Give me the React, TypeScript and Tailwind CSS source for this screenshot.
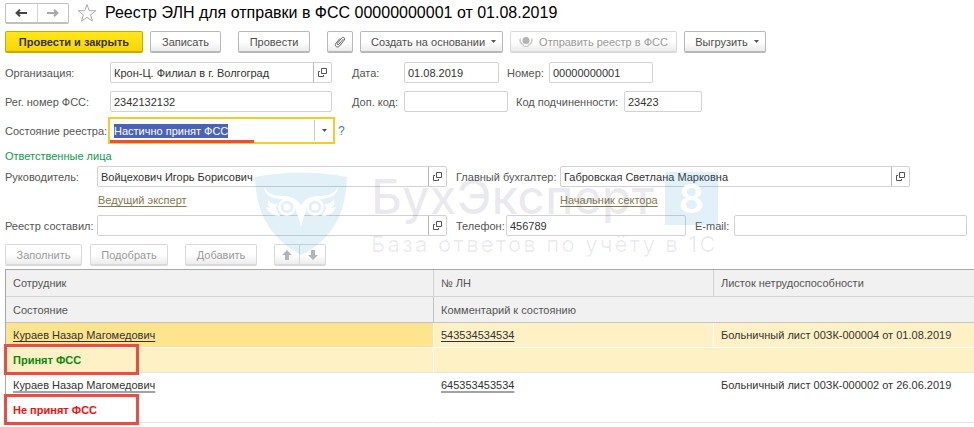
import { useEffect, useRef } from "react";
import type { ReactNode } from "react";
import clsx from "clsx";

const OpenIcon = (): JSX.Element => (
  <svg className="size-[9px]" viewBox="0 0 9 9" fill="none" stroke="#555">
    <path d="M3.5 .5h5v5h-5z" />
    <path d="M2 3.5H.5v5h5V7" />
  </svg>
);

const ClipIcon = (): JSX.Element => (
  <svg
    className="h-3 w-3"
    viewBox="0 0 12 12"
    fill="none"
    stroke="#666"
    strokeLinecap="round"
    strokeLinejoin="round"
  >
    <path d="M9 3.500 4.800 8.300c-1 1-2.200.1-1.400-1L7.500 2.200C9 .400 11.800 2 10.300 4L5.800 9.800c-2 2.500-5.800.6-4-2.300L5.500 2.800" />
  </svg>
);

const SendIcon = (): JSX.Element => (
  <svg className="h-3 w-3.5" viewBox="0 0 14 12" fill="none" stroke="#c8c8c8">
    <circle cx="7" cy="4.500" r="3.500" fill="#b4b4b4" stroke="none" />
    <path d="M1.500 2.500c-1 2.500 0 4.500 1.500 5.500l2 1.500M12.500 2.500c1 2.500 0 4.500-1.500 5.500l-2 1.500" strokeWidth="1.500" />
    <path d="M4.500 10.500h5" />
  </svg>
);

const StarIcon = (): JSX.Element => (
  <svg className="h-5 w-5" viewBox="0 0 20 20" fill="none" stroke="#aaa">
    <path d="m10 1.500 2.200 6.200 6.600.1-5.200 4 1.900 6.300L10 14.400l-5.500 3.700 1.900-6.300-5.200-4 6.600-.1z" />
  </svg>
);

const NavArrow = ({ color, back }: { color: string; back?: boolean }): JSX.Element => (
  <svg
    className={clsx("h-2 w-3", !back && "rotate-180")}
    viewBox="0 0 12 8"
    fill="none"
    stroke={color}
    strokeWidth="2"
  >
    <path d="M1.500 4H12M5 .8 1.600 4 5 7.200" />
  </svg>
);

const MoveArrow = ({ down }: { down?: boolean }): JSX.Element => (
  <svg className={clsx("h-2.5 w-2.5", down && "rotate-180")} viewBox="0 0 10 10" fill="#b0b7ba">
    <path d="M5 0 10 5H7v5H3V5H0z" />
  </svg>
);

const Caret = (): JSX.Element => (
  <svg className="h-[3px] w-[5px]" viewBox="0 0 5 3" fill="#555">
    <path d="M0 0h5L2.500 3z" />
  </svg>
);

type ButtonProps = {
  children: ReactNode;
  className?: string;
  disabled?: boolean;
  label?: string;
};

const Button = ({ children, className, disabled, label }: ButtonProps): JSX.Element => (
  <button
    type="button"
    aria-label={label}
    disabled={disabled}
    className={clsx(
      "flex h-[22px] shrink-0 items-center justify-center gap-1.5 rounded-xs border border-b-2 bg-linear-to-b from-white from-50% to-[#ececec] whitespace-nowrap",
      disabled ? "border-[#d9d9d9] text-[#9a9a9a]" : "border-[#b8b8b8] text-[#4d4d4d]",
      className
    )}
  >
    {children}
  </button>
);

type FieldProps = {
  id: string;
  label: string;
  value?: string;
  labelClass?: string;
  className?: string;
  open?: boolean;
};

const Field = ({ id, label, value, labelClass, className, open }: FieldProps): JSX.Element => (
  <>
    <label htmlFor={id} className={clsx("shrink-0 whitespace-nowrap text-[#555]", labelClass)}>
      {label}
    </label>
    <div className={clsx("flex h-[21px] rounded-xs border border-[#d2d2d2] bg-white", className)}>
      <input
        id={id}
        defaultValue={value}
        className="min-w-0 flex-1 px-[3px] text-[#333] outline-none"
      />
      {open && (
        <button
          type="button"
          aria-label="Открыть"
          className="flex w-[18px] items-center justify-center border-l border-[#b8b8b8]"
        >
          <OpenIcon />
        </button>
      )}
    </div>
  </>
);

const StatusField = (): JSX.Element => {
  const ref = useRef<HTMLInputElement>(null);

  useEffect(() => {
    ref.current?.focus();
    ref.current?.select();
  }, []);

  return (
    <div className="flex h-[27px] items-center">
      <label htmlFor="status" className="w-[103px] shrink-0 text-[#555]">
        Состояние реестра:
      </label>
      <div className="relative flex h-[27px] w-[227px] border-2 border-[#fcca25] bg-white py-px">
        <input
          id="status"
          ref={ref}
          defaultValue="Настично принят ФСС"
          className="min-w-0 flex-1 px-1 text-[#333] outline-none selection:bg-[#4a63b8] selection:text-white"
        />
        <button
          type="button"
          aria-label="Выбрать"
          className="flex w-[19px] items-center justify-center border-l border-[#c8c8c8]"
        >
          <Caret />
        </button>
        <div className="absolute bottom-[-1px] left-0 h-[3px] w-[144px] bg-[#ed4c46]" />
      </div>
      <a href="#help" className="ml-[3px] text-xs text-[#1c86c8]">
        ?
      </a>
    </div>
  );
};

const Watermark = (): JSX.Element => (
  <div className="pointer-events-none absolute top-[172px] left-[255px] flex gap-6" aria-hidden="true">
    <svg className="h-[83px] w-[92px]" viewBox="0 0 92 83">
      <path
        d="M0 5C30-1 62-1 92 5c-1 34-13 62-46 78C13 65 1 39 0 5z"
        fill="#3c9ad1"
        fillOpacity=".15"
      />
      <g fill="none" stroke="#fff">
        <circle cx="32" cy="35" r="7.500" strokeWidth="2.500" />
        <circle cx="60" cy="35" r="7.500" strokeWidth="2.500" />
      </g>
      <g fill="#fff">
        <circle cx="32" cy="35" r="3.500" />
        <circle cx="60" cy="35" r="3.500" />
        <path d="M9 15c5 9 13 9 21 9 9 1 14 5 16 10 2-5 7-9 16-10 8 0 16 0 21-9-1 9-8 11-16 12-9 1-15 3-16 9 0 4-1 6-2 8l-3 11-3-11c-1-2-2-4-2-8-1-6-7-8-16-9-8-1-15-3-16-12z" />
        <path d="M13 26c1 4 4 6 9 6l-1 4 4 8c-6 0-12-3-14-9l5 1c-3-2-4-5-3-10zM79 26c-1 4-4 6-9 6l1 4-4 8c6 0 12-3 14-9l-5 1c3-2 4-5 3-10z" />
      </g>
    </svg>
    <div className="font-[Inter,sans-serif] text-[#242450]/9">
      <div className="flex h-[60px] justify-between text-5xl leading-[50px] font-medium">
        БухЭксперт
        <span className="flex h-[53px] w-[53px] items-center justify-center bg-[#3c9ad1]/15 text-[40px] font-semibold text-white">
          8
        </span>
      </div>
      <div className="text-[22px] leading-6 tracking-widest whitespace-nowrap">
        База ответов по учёту в 1С
      </div>
    </div>
  </div>
);

type Row = {
  name: string;
  state: string;
  accepted: boolean;
  number: string;
  doc: string;
};

const rows: Row[] = [
  {
    name: "Кураев Назар Магомедович",
    state: "Принят ФСС",
    accepted: true,
    number: "543534534534",
    doc: "Больничный лист 00ЗК-000004 от 01.08.2019",
  },
  {
    name: "Кураев Назар Магомедович",
    state: "Не принят ФСС",
    accepted: false,
    number: "645353453534",
    doc: "Больничный лист 00ЗК-000002 от 26.06.2019",
  },
];

const RegistryTable = (): JSX.Element => (
  <table className="mt-[3px] w-full table-fixed border-separate border-spacing-0 border-t border-l border-[#a8a8a8] text-left text-[#333]">
    <colgroup>
      <col className="w-[428px]" />
      <col className="w-[280px]" />
      <col />
    </colgroup>
    <thead className="bg-[#f1f1f1] text-[#555]">
      <tr className="h-[27px]">
        <th className="border-r border-b border-[#d4d4d4] px-[7px] font-normal">Сотрудник</th>
        <th className="border-r border-b border-[#d4d4d4] px-[7px] font-normal">№ ЛН</th>
        <th className="border-b border-[#d4d4d4] px-[7px] font-normal">Листок нетрудоспособности</th>
      </tr>
      <tr className="h-[26px]">
        <th className="border-r border-b border-[#c4c4c4] px-[7px] font-normal">Состояние</th>
        <th colSpan={2} className="border-b border-[#c4c4c4] px-[7px] font-normal">
          Комментарий к состоянию
        </th>
      </tr>
    </thead>
    {rows.map((row) => {
      const link = clsx(
        "underline underline-offset-2",
        !row.accepted && "decoration-[#a3a3a3] decoration-2"
      );

      return (
        <tbody key={row.number} className={row.accepted ? "bg-[#fef1c6]" : "bg-white"}>
          <tr className="h-[25px]">
            <td
              className={clsx(
                "border-r border-b border-white px-[7px]",
                row.accepted && "bg-[#ffe48e]"
              )}
            >
              <a href="#employee" className={link}>
                {row.name}
              </a>
            </td>
            <td className="border-r border-b border-white px-[7px]">
              <a href="#sheet" className={link}>
                {row.number}
              </a>
            </td>
            <td className="border-b border-white px-[7px] whitespace-nowrap">{row.doc}</td>
          </tr>
          <tr className="h-[25px]">
            <td
              className={clsx(
                "relative border-r border-b border-r-white border-b-[#e4e4e4] px-[7px] font-bold",
                row.accepted ? "text-[#0a8a0a]" : "text-[#fb0d0d]"
              )}
            >
              {row.state}
              <div className="absolute -top-1 -left-0.5 h-[31px] w-[135px] border-3 border-[#ed4c46]" />
            </td>
            <td colSpan={2} className="border-b border-[#e4e4e4]" />
          </tr>
        </tbody>
      );
    })}
  </table>
);

const App = (): JSX.Element => (
  <main className="relative overflow-hidden bg-white pt-0.5 pb-1 pl-[5px] font-['Liberation_Sans',Arial,sans-serif] text-[11px] leading-[14px]">
    <header className="flex h-[22px] items-center">
      <div className="flex h-[21px] w-16 rounded-xs border border-b-2 border-[#c0c0c0]">
        <button
          type="button"
          aria-label="Назад"
          className="flex flex-1 items-center justify-center border-r border-[#d2d2d2]"
        >
          <NavArrow color="#444" back />
        </button>
        <button type="button" aria-label="Вперед" className="flex flex-1 items-center justify-center">
          <NavArrow color="#a8a8a8" />
        </button>
      </div>
      <button type="button" aria-label="В избранное" className="ml-2">
        <StarIcon />
      </button>
      <h1 className="ml-2 text-base leading-5 whitespace-nowrap text-black">
        Реестр ЭЛН для отправки в ФСС 00000000001 от 01.08.2019
      </h1>
    </header>

    <div className="mt-[7px] flex gap-[7px]">
      <button
        type="button"
        className="h-[22px] w-[138px] shrink-0 rounded-xs border border-b-2 border-[#c9ab00] bg-linear-to-b from-[#ffe71a] to-[#f8d500] font-bold text-[#333]"
      >
        Провести и закрыть
      </button>
      <Button className="w-[71px]">Записать</Button>
      <Button className="ml-2.5 w-[72px]">Провести</Button>
      <Button className="ml-2.5 w-[26px]" label="Файлы">
        <ClipIcon />
      </Button>
      <Button className="w-[143px] pl-1">
        Создать на основании
        <Caret />
      </Button>
      <Button className="w-[167px]" disabled>
        <SendIcon />
        Отправить реестр в ФСС
      </Button>
      <Button className="w-[82px] pl-1">
        Выгрузить
        <Caret />
      </Button>
    </div>

    <form>
      <div className="mt-[9px] flex items-center">
        <Field id="org" label="Организация:" value="Крон-Ц. Филиал в г. Волгоград" labelClass="w-[105px]" className="w-[222px]" open />
        <Field id="date" label="Дата:" value="01.08.2019" labelClass="ml-5 w-[52px]" className="w-[95px]" />
        <Field id="number" label="Номер:" value="00000000001" labelClass="ml-2 w-[42px]" className="w-[104px]" />
      </div>
      <div className="mt-2 mb-[5px] flex items-center">
        <Field id="fss" label="Рег. номер ФСС:" value="2342132132" labelClass="w-[105px]" className="w-[222px]" />
        <Field id="extra" label="Доп. код:" labelClass="ml-5 w-[52px]" className="w-[104px]" />
        <Field id="sub" label="Код подчиненности:" value="23423" labelClass="ml-2 w-[108px]" className="w-[78px]" />
      </div>
      <StatusField />

      <h2 className="mt-[5px] text-[#0e9a4b]">Ответственные лица</h2>
      <div className="mt-[3px] flex items-center">
        <Field id="head" label="Руководитель:" value="Войцехович Игорь Борисович" labelClass="w-[92px]" className="w-[350px]" open />
        <Field id="chief" label="Главный бухгалтер:" value="Габровская Светлана Марковна" labelClass="ml-[9px] w-[104px]" className="w-[350px]" open />
      </div>
      <div className="flex h-7 items-center pb-0.5 text-[#857a4e]">
        <a href="#head-post" className="ml-[93px] w-[462px] underline underline-offset-2">
          Ведущий эксперт
        </a>
        <a href="#chief-post" className="underline underline-offset-2">
          Начальник сектора
        </a>
      </div>
      <div className="flex items-center pr-[7px]">
        <Field id="author" label="Реестр составил:" labelClass="w-[92px]" className="w-[350px]" open />
        <Field id="phone" label="Телефон:" value="456789" labelClass="ml-[9px] w-[50px]" className="w-[180px]" />
        <Field id="email" label="E-mail:" labelClass="ml-[9px] w-[39px]" className="flex-1" />
      </div>
    </form>

    <div className="mt-2 flex gap-2">
      <Button className="w-[77px]" disabled>
        Заполнить
      </Button>
      <Button className="w-[78px]" disabled>
        Подобрать
      </Button>
      <Button className="ml-[9px] w-[72px]" disabled>
        Добавить
      </Button>
      <div className="ml-[9px] flex">
        <Button className="w-[26px] rounded-r-none" label="Вверх" disabled>
          <MoveArrow />
        </Button>
        <Button className="w-[26px] rounded-l-none border-l-0" label="Вниз" disabled>
          <MoveArrow down />
        </Button>
      </div>
    </div>

    <RegistryTable />
    <Watermark />
  </main>
);

export default App;
